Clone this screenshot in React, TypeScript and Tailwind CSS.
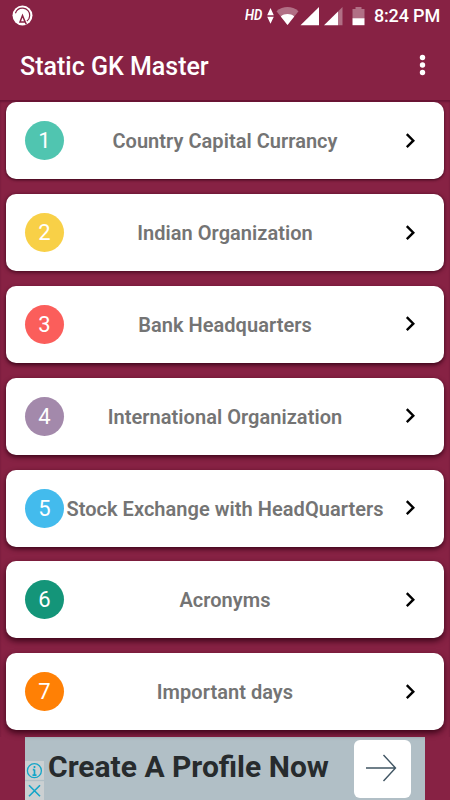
type Topic = {
	title: string
	color: string
	shadow: string
}

const topics: Topic[] = [
	{ title: "Country Capital Currancy", color: "bg-[#50c5b0]", shadow: "shadow-[0_1px_3px_#3a0418]" },
	{ title: "Indian Organization", color: "bg-[#f8d047]", shadow: "shadow-[0_1px_4px_#3a0418]" },
	{ title: "Bank Headquarters", color: "bg-[#fb5e5b]", shadow: "shadow-[0_2px_4px_#3a0418]" },
	{ title: "International Organization", color: "bg-[#a389ab]", shadow: "shadow-[0_2px_5px_#3a0418]" },
	{ title: "Stock Exchange with HeadQuarters", color: "bg-[#43bbed]", shadow: "shadow-[0_2px_5px_#3a0418]" },
	{ title: "Acronyms", color: "bg-[#149579]", shadow: "shadow-[0_3px_6px_#3a0418]" },
	{ title: "Important days", color: "bg-[#ff8005]", shadow: "shadow-[0_3px_6px_#3a0418]" },
]

function StatusBar() {
	return (
		<div className="flex h-8 items-center justify-between pl-3 pr-[10px]">
			<svg width="21" height="21" viewBox="0 0 21 21" className="-mt-[2px]">
				<circle cx="10.5" cy="10.5" r="10" fill="#fff" />
				<path d="M3.400 8.200C4.800 4.600 7.700 2.900 11 3.200c4.200.4 7 3.600 6.700 7.500-.1 2.300-1.200 4.200-2.800 5.400" fill="none" stroke="#872244" strokeWidth="1.2" />
				<path d="M8 17 10.500 10.500l2.600 6.500ZM12.800 16l1.600 3.500" fill="none" stroke="#872244" strokeWidth="1.5" />
			</svg>
			<div className="flex items-center">
				<span className="mr-1 -mt-px w-[18px] origin-left scale-x-[0.88] text-[15px] font-semibold italic leading-none">HD</span>
				<svg width="101" height="22" viewBox="268 4 101 22" fill="#fff">
					<path d="M268.200 14.200 271.500 7 274.800 14.200ZM268.200 15.800h6.600l-3.300 7Z" />
					<path d="M277.500 10.300C284 4.700 293 4.700 299.500 10.300L288.500 24Z" opacity=".35" />
					<path d="M281.800 15.400C285.500 12.200 291.500 12.200 295.200 15.400L288.500 24Z" />
					<path d="M301.500 24.200 320 6V24.200Z" />
					<path d="M339 10.500 343.500 6V24.200H339Z" opacity=".35" />
					<path d="M325 24.200 339 10.500V24.200Z" />
					<path d="M353.500 8h3V6h6v2h3V17.200h-12Z" opacity=".35" />
					<path d="M353.500 17.200h12v7h-12Z" />
				</svg>
				<span className="ml-[6px] text-[18px] font-medium leading-none tracking-[-0.15px]">8:24 PM</span>
			</div>
		</div>
	)
}

function Toolbar() {
	return (
		<div className="flex h-[68px] items-center justify-between pl-5 pr-[24px]">
			<h1 className="text-[25px] font-medium leading-none">Static GK Master</h1>
			<svg width="7" height="22" viewBox="0 0 7 22" fill="#fff" className="-mt-[2px]">
				<circle cx="3.5" cy="3.500" r="2.700" />
				<circle cx="3.5" cy="11" r="2.700" />
				<circle cx="3.5" cy="18.500" r="2.700" />
			</svg>
		</div>
	)
}

function TopicCard(props: { topic: Topic, number: number }) {
	return (
		<div className={`flex h-[77px] items-center rounded-[10px] bg-white pl-[19px] pr-[28px] ${props.topic.shadow}`}>
			<div className={`flex size-[39px] shrink-0 items-center justify-center rounded-full text-[22px] text-white ${props.topic.color}`}>
				{props.number}
			</div>
			<div className="mr-[19px] flex flex-1 justify-center whitespace-nowrap pt-px text-[20px] font-semibold tracking-[0.04px] text-[#747474]">
				{props.topic.title}
			</div>
			<svg width="11" height="16" viewBox="0 0 11 16" className="shrink-0" fill="none" stroke="#000" strokeWidth="2.4">
				<path d="M1.800 1.200 8.300 7.700 1.800 14.200" />
			</svg>
		</div>
	)
}

function AdBanner() {
	return (
		<div className="mx-[25px] flex h-[63px] bg-[#b1bfc6] font-bold text-[#272b2d]">
			<div className="flex w-[19px] flex-col justify-end">
				<svg width="19" height="39" viewBox="0 0 19 39" fill="none" stroke="#14a5c8" strokeWidth="1.3">
					<path d="M0 0h19v39H0Z" fill="#cbd0d2" stroke="none" />
					<path d="M0 19.500h19" stroke="#b1bfc6" />
					<circle cx="9.400" cy="9.700" r="7" />
					<path d="M9.500 8.500v5.800M7.800 8.700h1.700M7.500 14.200h4M9.500 5v2" strokeWidth="1.700" />
					<path d="m4 24.200 11 11M15 24.200l-11 11" strokeWidth="1.600" />
				</svg>
			</div>
			<div className="ml-1 flex-1 whitespace-nowrap pt-[11px] text-[30px] leading-[38px]">Create A Profile Now</div>
			<div className="mr-[14px] mt-[3px] flex h-[58px] w-[57px] items-center justify-center rounded-md bg-white pr-1 pb-[2px]">
				<svg width="32" height="28" viewBox="0 0 32 28" fill="none" stroke="#405563" strokeWidth="1.400">
					<path d="M1 14h29.500M18.500 1l12 13-12 13" />
				</svg>
			</div>
		</div>
	)
}

export default function App() {
	return (
		<div className="h-[800px] w-[450px] overflow-hidden bg-[#872244] font-['Roboto',sans-serif] text-white">
			<StatusBar />
			<Toolbar />
			<div className="flex flex-col gap-[14.8px] px-[6px] pb-[6.600px] pt-[2.400px] shadow-[inset_0_2px_2px_#6b1535]">
				{topics.map((topic, i) => (
					<TopicCard key={topic.title} topic={topic} number={i + 1} />
				))}
			</div>
			<AdBanner />
		</div>
	)
}
